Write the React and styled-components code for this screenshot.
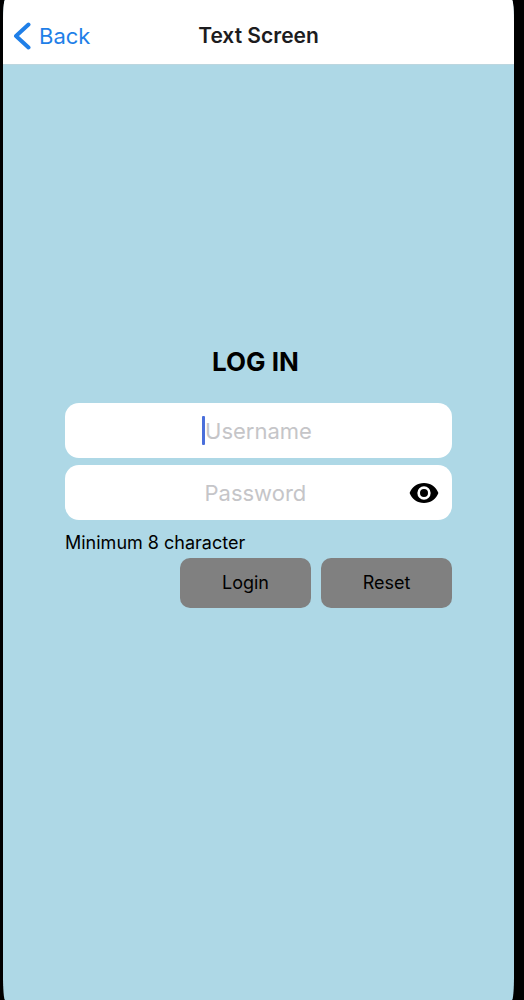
import React from "react";
import styled, { createGlobalStyle } from "styled-components";

const GlobalStyle = createGlobalStyle`
  *, *::before, *::after { box-sizing: border-box; }
  body {
    margin: 0;
    background: #000;
    color: #000;
    font-family: Inter, "Liberation Sans", sans-serif;
  }
`;

const Screen = styled.div`
  display: flex;
  flex-direction: column;
  min-height: 100vh;
  margin: 0 10px 0 3px;
  border-radius: 2px / 24px;
  overflow: hidden;
  background: #aed8e6;
`;

const Header = styled.header`
  display: grid;
  grid-template-columns: 1fr auto 1fr;
  align-items: center;
  height: 65px;
  padding: 7px 10px 0;
  background: #fff;
  border-bottom: 1px solid #bcd6df;
`;

const BackLink = styled.a`
  display: flex;
  align-items: center;
  justify-self: start;
  gap: 8px;
  color: #1f7fe8;
  font-size: 22px;
  line-height: 28px;
  text-decoration: none;
`;

const Title = styled.h1`
  margin: 0;
  color: #1c1c1e;
  font-size: 21px;
  font-weight: 600;
  line-height: 28px;
`;

const Form = styled.form`
  display: flex;
  flex-direction: column;
  padding: 281px 62px 40px;
`;

const Heading = styled.h2`
  margin: 0 0 25px;
  font-size: 26px;
  font-weight: 700;
  line-height: 32px;
  text-align: center;
  white-space: pre;
`;

const Fields = styled.div`
  display: flex;
  flex-direction: column;
  gap: 7px;
`;

const Field = styled.div`
  position: relative;
  display: flex;
`;

const TextInput = styled.input`
  width: 100%;
  height: 55px;
  padding: 0 48px;
  border: 0;
  border-radius: 14px;
  outline: none;
  background: #fff;
  color: #000;
  caret-color: transparent;
  font: 400 22px/28px Inter, "Liberation Sans", sans-serif;
  text-align: center;

  &::placeholder { color: #c5c5c8; opacity: 1; }
`;

const Caret = styled.span`
  position: absolute;
  top: 13px;
  left: calc(50% - 57px);
  width: 3px;
  height: 29px;
  border-radius: 1px;
  background: #4a6fdb;
`;

const EyeButton = styled.button`
  position: absolute;
  top: 12px;
  right: 12px;
  display: flex;
  padding: 0;
  border: 0;
  background: none;
  color: #000;
`;

const Hint = styled.p`
  margin: 11px 0 3px;
  font-size: 18px;
  line-height: 24px;
`;

const Actions = styled.div`
  display: flex;
  justify-content: flex-end;
  gap: 10px;
`;

const ActionButton = styled.button`
  width: 131px;
  height: 50px;
  padding: 0;
  border: 0;
  border-radius: 10px;
  background: #808080;
  color: #000;
  font: 400 18px/24px Inter, "Liberation Sans", sans-serif;
`;

export default function App() {
  return (
    <>
      <GlobalStyle />
      <Screen>
        <Header>
          <BackLink href="#back">
            <svg width="18" height="28" viewBox="0 0 18 28" fill="none" aria-hidden="true">
              <path d="M15.500 2.500 3 14l12.500 11.500" stroke="currentColor" strokeWidth="4" strokeLinecap="round" strokeLinejoin="round" />
            </svg>
            Back
          </BackLink>
          <Title>Text Screen</Title>
        </Header>
        <Form onSubmit={(e) => e.preventDefault()}>
          <Heading>{"LOG IN "}</Heading>
          <Fields>
            <Field>
              <TextInput type="text" placeholder="Username" aria-label="Username" />
              <Caret />
            </Field>
            <Field>
              <TextInput type="password" placeholder="Password " aria-label="Password" />
              <EyeButton type="button" aria-label="Show password">
                <svg width="32" height="32" viewBox="0 0 24 24" aria-hidden="true">
                  <path fill="currentColor" d="M12 4.500C7 4.500 2.730 7.610 1.200 12c1.530 4.390 5.800 7.500 10.800 7.500s9.270-3.110 10.800-7.500c-1.530-4.390-5.800-7.500-10.800-7.500z" />
                  <circle cx="12" cy="12" r="4" fill="none" stroke="#fff" strokeWidth="2" />
                </svg>
              </EyeButton>
            </Field>
          </Fields>
          <Hint>Minimum 8 character</Hint>
          <Actions>
            <ActionButton type="submit">Login</ActionButton>
            <ActionButton type="reset">Reset</ActionButton>
          </Actions>
        </Form>
      </Screen>
    </>
  );
}
